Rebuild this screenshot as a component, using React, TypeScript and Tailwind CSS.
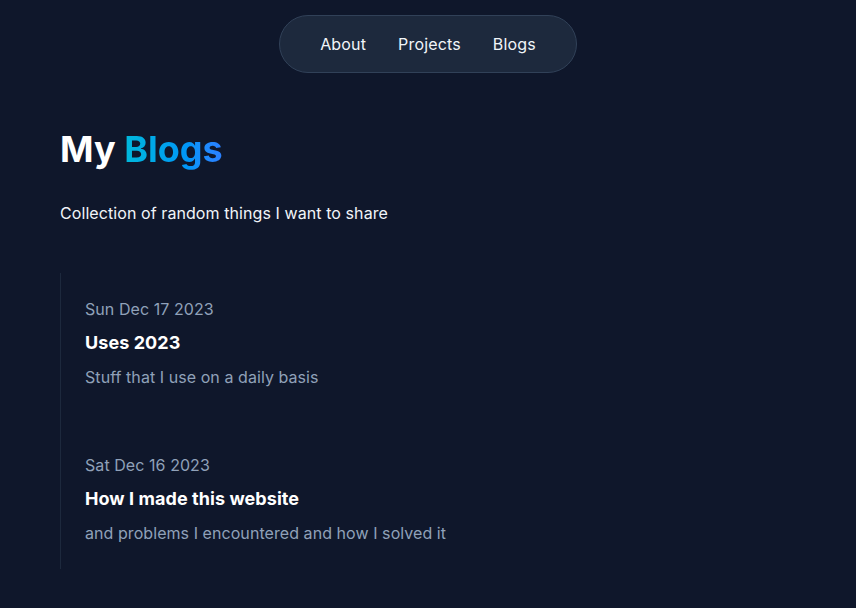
import React from "react";

interface Post {
  date: string;
  title: string;
  description: string;
}

const posts: Post[] = [
  { date: "Sun Dec 17 2023", title: "Uses 2023", description: "Stuff that I use on a daily basis" },
  { date: "Sat Dec 16 2023", title: "How I made this website", description: "and problems I encountered and how I solved it" },
];

const Navbar = () => {
  return (
    <nav className="flex justify-center pt-[15px]">
      <div className="flex gap-8 rounded-full border border-slate-700 bg-slate-800 px-10 py-4 text-base tracking-[0.01em] text-slate-100">
        <a href="#">About</a>
        <a href="#">Projects</a>
        <a href="#">Blogs</a>
      </div>
    </nav>
  );
};

const BlogItem = ({ post }: { post: Post }) => {
  return (
    <article className="py-6 pl-6 tracking-[0.004em]">
      <p className="text-base text-slate-400">{post.date}</p>
      <h3 className="mt-2 text-lg font-bold text-white">{post.title}</h3>
      <p className="mt-2 text-base text-slate-400">{post.description}</p>
    </article>
  );
};

export default function App() {
  return (
    <div className="min-h-[608px] bg-slate-900 font-['Inter',sans-serif]">
      <Navbar />
      <main className="mx-auto max-w-3xl px-4">
        <h1 className="mt-14 text-4xl font-bold text-white">
          My{" "}
          <span className="bg-gradient-to-r from-cyan-500 to-blue-500 bg-clip-text text-transparent">Blogs</span>
        </h1>
        <p className="mt-8 text-base tracking-[0.005em] text-slate-100">Collection of random things I want to share</p>
        <div className="mt-12 flex flex-col gap-4 border-l border-slate-800">
          {posts.map((post) => (
            <BlogItem key={post.title} post={post} />
          ))}
        </div>
      </main>
    </div>
  );
}
